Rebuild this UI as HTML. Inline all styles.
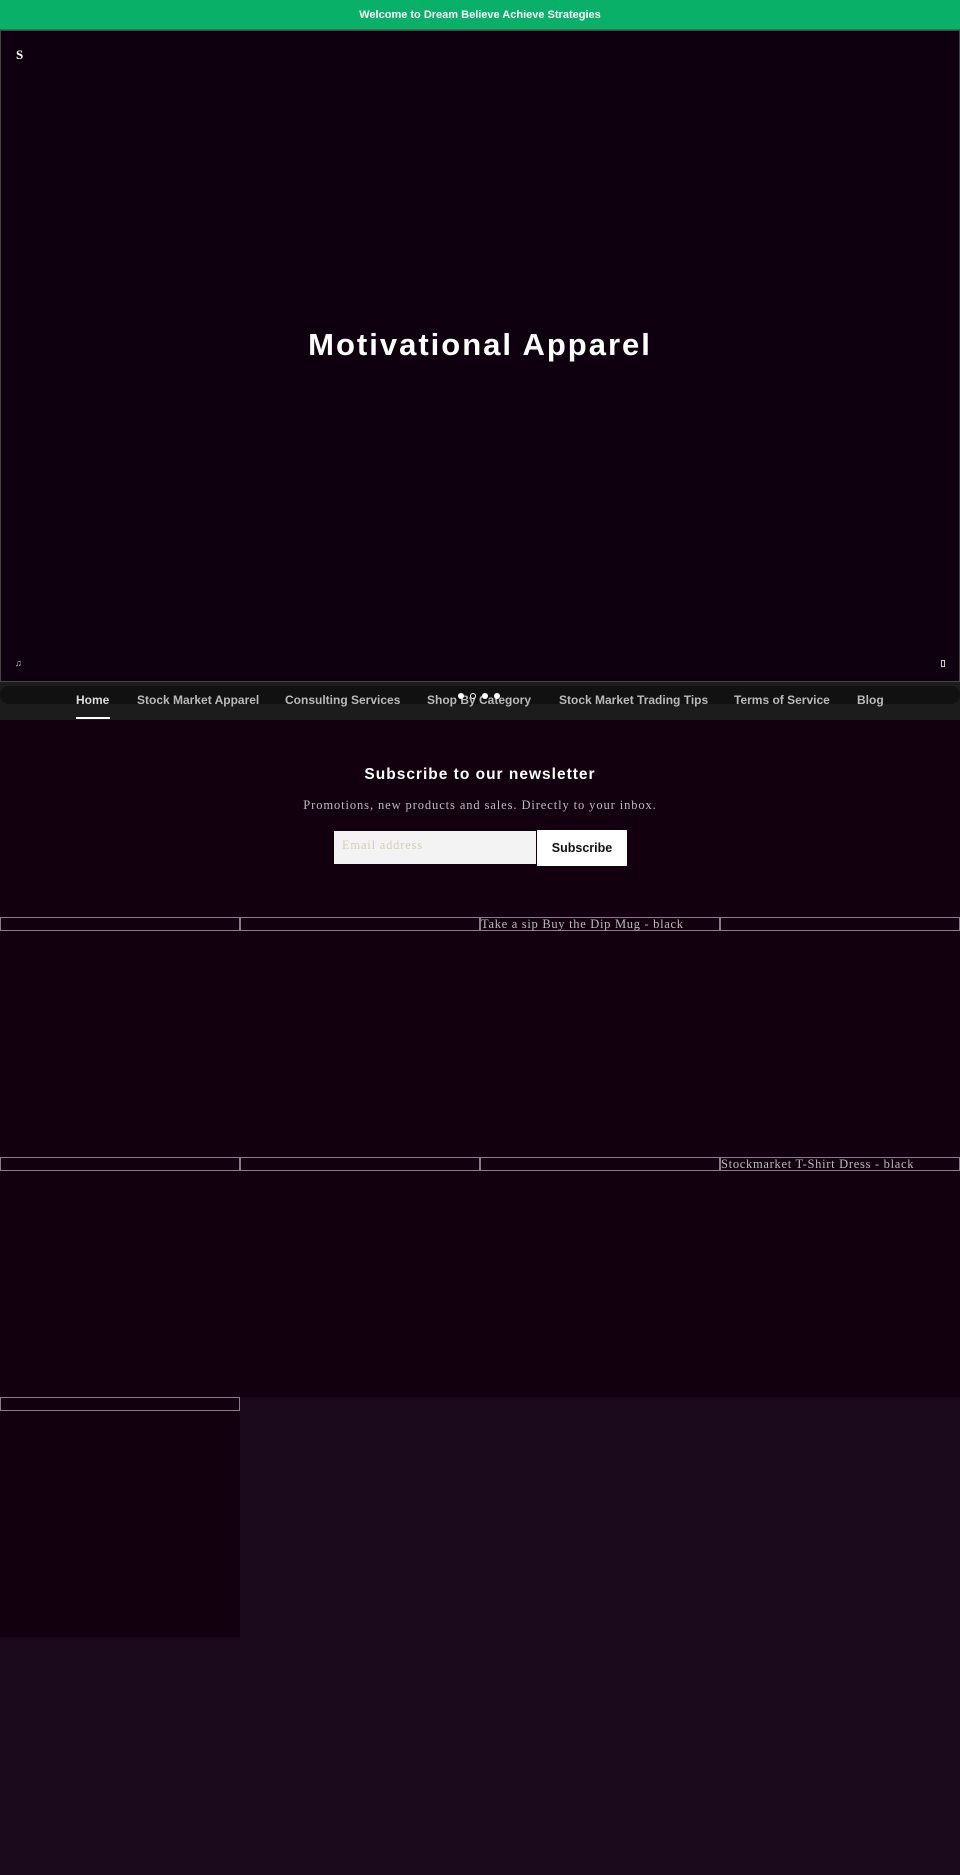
<!DOCTYPE html>
<html><head><style>
*{margin:0;padding:0;box-sizing:border-box}
body{width:960px;height:1875px;background:#1a0a1b;font-family:"Liberation Sans",sans-serif;overflow:hidden;position:relative}
.top{height:30px;background:#08b167;color:#fff;font-size:11px;font-weight:bold;text-align:center;line-height:30px;border-bottom:1px solid #2a7a4a}
.hero{position:absolute;top:30px;left:0;width:960px;height:652px;background:#0f0010;border:1px solid #444}
.hero h1{position:absolute;top:296px;left:0;width:100%;text-align:center;color:#fff;font-size:31px;letter-spacing:2px;font-weight:bold}
.s{position:absolute;left:15px;top:16px;color:#fff;font-family:"Liberation Serif",serif;font-size:13px;font-weight:bold}
.nav{position:absolute;top:682px;left:0;width:960px;height:38px;background:#1c1c1c}
.nav .pill{position:absolute;top:4px;left:0;width:960px;height:18px;background:#111;border-radius:9px}
.nav a{position:absolute;top:11px;color:#bbb;font-size:12px;font-weight:bold;text-decoration:none}
.ul{position:absolute;left:76px;top:35px;width:34px;height:2px;background:#fff}
.dot{position:absolute;top:693px;width:6px;height:6px;border-radius:50%;background:#fff}
.sec{position:absolute;top:720px;left:0;width:960px;height:677px;background:#12000f}
.sec h2{position:absolute;top:46px;width:100%;text-align:center;color:#fff;font-size:15.5px;letter-spacing:1px}
.sec p{position:absolute;top:78px;width:100%;text-align:center;color:#bbb;font-family:"Liberation Serif",serif;font-size:12.5px;letter-spacing:.9px}
.inp{position:absolute;left:334px;top:111px;width:202px;height:33px;background:#f3f3f3;color:#d8ccb8;font-family:"Liberation Serif",serif;font-size:12.5px;padding:7px 8px;letter-spacing:.8px}
.btn{position:absolute;left:537px;top:110px;width:90px;height:36px;background:#fff;color:#111;font-weight:bold;font-size:12.5px;text-align:center;line-height:36px}
.cell{position:absolute;width:240px;height:240px;background:#12000f}
.lbl{position:absolute;left:0;top:0;width:240px;height:14px;border:1px solid #8a7a8a;color:#bbb;font-family:"Liberation Serif",serif;font-size:12.5px;line-height:12px;white-space:nowrap;letter-spacing:.7px}
</style></head><body>
<div class="top">Welcome to Dream Believe Achieve Strategies</div>
<div class="hero"><div class="s">S</div><h1>Motivational Apparel</h1>
<div style="position:absolute;left:14px;top:627px;color:#ccc;font-size:9px">♫</div>
<div style="position:absolute;left:940px;top:629px;width:4px;height:7px;border:1px solid #ccc"></div></div>
<div class="nav"><div class="pill"></div>
<a style="left:76px;color:#ddd">Home</a><a style="left:137px">Stock Market Apparel</a><a style="left:285px">Consulting Services</a><a style="left:427px">Shop By Category</a><a style="left:559px">Stock Market Trading Tips</a><a style="left:734px">Terms of Service</a><a style="left:857px">Blog</a><div class="ul"></div></div>
<div class="dot" style="left:458px"></div><div class="dot" style="left:470px;background:none;border:1px solid #fff"></div><div class="dot" style="left:482px"></div><div class="dot" style="left:494px"></div>
<div class="sec"><h2>Subscribe to our newsletter</h2><p>Promotions, new products and sales. Directly to your inbox.</p><div class="inp">Email address</div><div class="btn">Subscribe</div></div>
<div class="cell" style="left:0;top:917px"><div class="lbl"></div></div>
<div class="cell" style="left:240px;top:917px"><div class="lbl"></div></div>
<div class="cell" style="left:480px;top:917px"><div class="lbl">Take a sip Buy the Dip Mug - black</div></div>
<div class="cell" style="left:720px;top:917px"><div class="lbl"></div></div>
<div class="cell" style="left:0;top:1157px"><div class="lbl"></div></div>
<div class="cell" style="left:240px;top:1157px"><div class="lbl"></div></div>
<div class="cell" style="left:480px;top:1157px"><div class="lbl"></div></div>
<div class="cell" style="left:720px;top:1157px"><div class="lbl">Stockmarket T-Shirt Dress - black</div></div>
<div class="cell" style="left:0;top:1397px"><div class="lbl"></div></div>
</body></html>
